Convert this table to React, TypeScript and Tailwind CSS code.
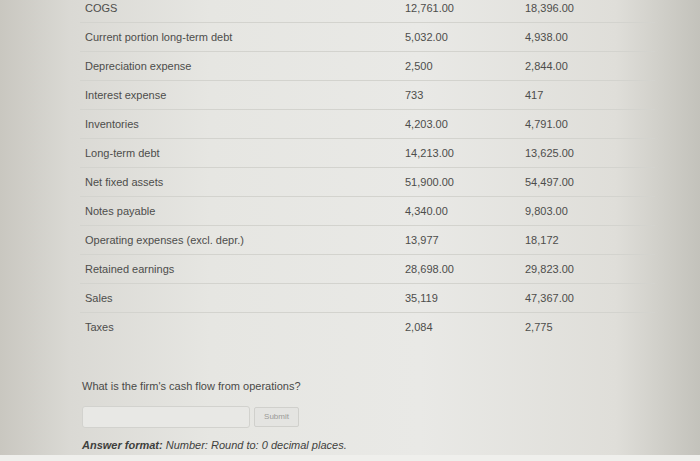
const rows: [string, string, string][] = [
  ["COGS", "12,761.00", "18,396.00"],
  ["Current portion long-term debt", "5,032.00", "4,938.00"],
  ["Depreciation expense", "2,500", "2,844.00"],
  ["Interest expense", "733", "417"],
  ["Inventories", "4,203.00", "4,791.00"],
  ["Long-term debt", "14,213.00", "13,625.00"],
  ["Net fixed assets", "51,900.00", "54,497.00"],
  ["Notes payable", "4,340.00", "9,803.00"],
  ["Operating expenses (excl. depr.)", "13,977", "18,172"],
  ["Retained earnings", "28,698.00", "29,823.00"],
  ["Sales", "35,119", "47,367.00"],
  ["Taxes", "2,084", "2,775"],
];

export default function App() {
  return (
    <div
      className="w-[700px] h-[461px] overflow-hidden flex flex-col text-[#4d4d4b] bg-[linear-gradient(90deg,#c9c7c0_0%,#dad9d4_10%,#e6e6e2_30%,#e9e9e6_60%,#dfded9_88%,#c3c2bb_100%)]"
      style={{ fontFamily: '"Liberation Sans", Arial, sans-serif' }}
    >
      <div className="flex-1 pl-[80px] flex flex-col">
        <div className="w-[575px] mt-[-6px]">
          {rows.map(([label, a, b], i) => (
            <div
              key={label}
              className={`flex h-[29px] items-center text-[11px] ${
                i < rows.length - 1 ? "border-b border-[#d3d3ce]" : ""
              }`}
            >
              <div className="w-[310px] pl-[5px]">{label}</div>
              <div className="w-[120px] pl-[15px]">{a}</div>
              <div className="w-[145px] pl-[15px]">{b}</div>
            </div>
          ))}
        </div>

        <div className="mt-[36px] pl-[2px] text-[11px] text-[#4a4a48]">
          What is the firm's cash flow from operations?
        </div>

        <div className="mt-[11px] pl-[2px] flex items-center gap-[4px]">
          <div className="w-[168px] h-[22px] rounded-[3px] border border-[#d2d2ce] bg-[#e8e8e5]" />
          <div className="w-[45px] h-[20px] rounded-[2px] border border-[#d0d0cc] bg-[#e4e4e1] flex items-center justify-center text-[8px] text-[#9a9a97]">
            Submit
          </div>
        </div>

        <div className="mt-[9px] pl-[2px] text-[11px] italic text-[#3f3f3d]">
          <span className="font-bold">Answer format:</span> Number: Round to: 0 decimal places.
        </div>
      </div>
      <div className="h-[6px] bg-[#efefec]" />
    </div>
  );
}
